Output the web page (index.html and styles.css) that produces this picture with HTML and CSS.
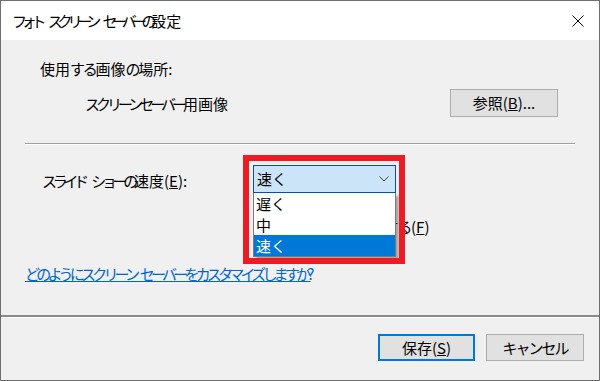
FILE: index.html
```html
<!DOCTYPE html>
<html lang="ja">
<head>
<meta charset="utf-8">
<title>フォト スクリーン セーバーの設定</title>
<link rel="stylesheet" href="styles.css">
</head>
<body>
<div class="window">
  <div class="titlebar">
    <span class="title"><span class="k">フォト</span> <span class="k">スクリーン</span> <span class="k">セーバーの</span>設定</span>
    <svg class="close" width="12" height="12" viewBox="0 0 12 12"><path d="M0.5 0.5 L11.5 11.5 M11.5 0.5 L0.5 11.5" stroke="#000" stroke-width="1" fill="none"/></svg>
  </div>
  <div class="content">
    <div class="caption">使用<span class="k">する</span>画像<span class="k">の</span>場所:</div>
    <div class="location">
      <span class="loc-text"><span class="k">スクリーンセーバー</span>用画像</span>
      <button class="btn browse">参照(<u>B</u>)...</button>
    </div>
    <div class="sep"></div>
    <div class="speed">
      <div class="speed-label"><span class="k">スライド</span> <span class="k">ショーの</span>速度(<u>E</u>):</div>
      <div class="controls">
        <div class="combo">
          <span>速く</span>
          <svg class="chev" width="10" height="6" viewBox="0 0 10 6"><path d="M0.5 0.5 L5 5 L9.5 0.5" stroke="#444" stroke-width="1" fill="none"/></svg>
          <ul class="dropdown">
            <li>遅く</li>
            <li>中</li>
            <li class="sel">速く</li>
          </ul>
        </div>
        <div class="check">
          <span class="box"></span>
          <span class="check-text">画像<span class="k">をシャッフルする</span>(<u>F</u>)</span>
        </div>
        <div class="mark"></div>
      </div>
    </div>
    <a class="link" href="#">どのようにスクリーン セーバーをカスタマイズしますか?</a>
  </div>
  <div class="footer">
    <button class="btn save">保存(<u>S</u>)</button>
    <button class="btn cancel">キャンセル</button>
  </div>
</div>
</body>
</html>
```
FILE: styles.css
```css
* { box-sizing: border-box; }
html, body { margin: 0; padding: 0; }
body {
  width: 600px;
  height: 381px;
  overflow: hidden;
  background: #f0f0f0;
  font-family: "Noto Sans CJK JP", "Noto Sans CJK SC", sans-serif;
  font-size: 15px;
  color: #000;
}
.window {
  width: 600px;
  height: 381px;
  border: 1px solid #6e6e6e;
  display: flex;
  flex-direction: column;
  background: #f0f0f0;
}
.titlebar {
  height: 39px;
  flex: none;
  background: #fff;
  display: flex;
  align-items: center;
  padding: 0 15px 0 11px;
}
.title { flex: 1; line-height: 20px; word-spacing: 3px; }
.title .k { letter-spacing: -5.2px; }
.close { display: block; }
.content {
  flex: 1;
  padding: 19px 24px 0 24px;
}
.caption { line-height: 20px; margin-left: 15px; }
.caption .k { letter-spacing: -2.3px; }
.location {
  display: flex;
  align-items: center;
  height: 28px;
  margin-top: 10px;
  padding-left: 60px;
}
.loc-text .k { letter-spacing: -4px; }
.btn {
  font: inherit;
  color: #000;
  background: #e1e1e1;
  border: 1px solid #adadad;
  padding: 0;
  display: flex;
  align-items: center;
  justify-content: center;
  line-height: 20px;
}
.browse { width: 108px; height: 28px; margin-left: auto; margin-right: 17px; }
.sep {
  height: 2px;
  border-top: 1px solid #a0a0a0;
  border-bottom: 1px solid #fff;
  margin-top: 26px;
}
.speed { display: flex; margin-top: 20px; }
.speed-label { width: 228px; padding-left: 17px; line-height: 28px; padding-top: 2px; word-spacing: 3px; }
.speed-label .k { letter-spacing: -4.3px; }
.controls { position: relative; flex: 1; }
.combo {
  position: relative;
  width: 143px;
  height: 28px;
  border: 1px solid #0054a6;
  background: #cce4f7;
  display: flex;
  align-items: center;
  justify-content: space-between;
  padding: 0 6px 0 3px;
  line-height: 20px;
  z-index: 2;
}
.chev { display: block; }
.dropdown {
  position: absolute;
  left: -1px;
  top: 27px;
  width: 143px;
  margin: 0;
  padding: 0;
  list-style: none;
  background: #fff;
  border: 1px solid #7a7a7a;
  border-top: none;
  box-shadow: 3px 3px 2px rgba(0, 0, 0, 0.3);
}
.dropdown li { height: 21px; line-height: 21px; padding-left: 2px; }
.dropdown li.sel { background: #0078d7; color: #fff; }
.check {
  display: flex;
  align-items: center;
  margin-top: 24px;
  line-height: 20px;
}
.box {
  width: 13px;
  height: 13px;
  border: 1px solid #333;
  background: #fff;
  margin-right: 5px;
}
.check-text { white-space: nowrap; }
.check-text .k { letter-spacing: -1.25px; }
.mark {
  position: absolute;
  left: -10px;
  top: -10px;
  width: 162px;
  height: 109px;
  border: 6px solid #ed1c24;
  z-index: 3;
}
.link {
  display: inline-block;
  margin-top: 27px;
  color: #0066cc;
  line-height: 20px;
  letter-spacing: -3.8px;
  word-spacing: 4px;
  text-decoration: underline;
}
.footer {
  height: 65px;
  flex: none;
  border-top: 2px solid #8a8a8a;
  box-shadow: inset 0 1px #fff;
  display: flex;
  justify-content: flex-end;
  align-items: flex-start;
  gap: 11px;
  padding: 17px 15px 0 0;
}
.save { width: 97px; height: 27px; border: 2px solid #0078d7; }
.cancel { width: 98px; height: 27px; letter-spacing: -2px; }
```
